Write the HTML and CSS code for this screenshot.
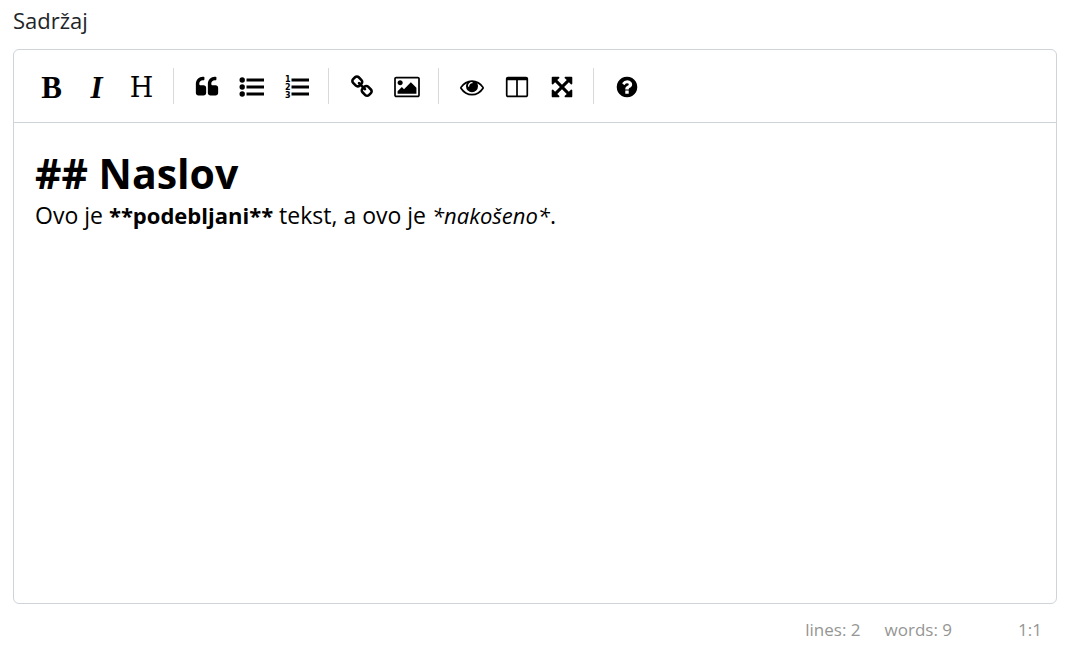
FILE: index.html
```html
<!DOCTYPE html>
<html lang="hr">
<head>
<meta charset="utf-8">
<meta name="viewport" content="width=device-width, initial-scale=1">
<title>Sadržaj</title>
<link rel="stylesheet" href="styles.css">
</head>
<body>
<main class="field">
  <div class="field-label" id="content-label">Sadržaj</div>
  <div class="editor">
    <div class="toolbar" role="toolbar" aria-label="Oblikovanje">
      <button type="button" class="tool letter bold" aria-label="Bold">B</button>
      <button type="button" class="tool letter bold italic" aria-label="Italic">I</button>
      <button type="button" class="tool letter slab" aria-label="Heading">H</button>
      <span class="separator"></span>
      <button type="button" class="tool" aria-label="Quote"><svg class="icon" viewBox="0 0 1792 1792"><path d="M832 960v384q0 80-56 136t-136 56h-384q-80 0-136-56t-56-136v-704q0-104 40.500-198.500t109.500-163.500 163.500-109.500 198.500-40.500h64q26 0 45 19t19 45v128q0 26-19 45t-45 19h-64q-106 0-181 75t-75 181v32q0 40 28 68t68 28h224q80 0 136 56t56 136zm896 0v384q0 80-56 136t-136 56h-384q-80 0-136-56t-56-136v-704q0-104 40.500-198.500t109.500-163.500 163.500-109.500 198.500-40.500h64q26 0 45 19t19 45v128q0 26-19 45t-45 19h-64q-106 0-181 75t-75 181v32q0 40 28 68t68 28h224q80 0 136 56t56 136z"/></svg></button>
      <button type="button" class="tool" aria-label="Bulleted list"><svg class="icon wide" viewBox="0 0 26 24"><circle cx="3.200" cy="5" r="2.700"/><circle cx="3.200" cy="12" r="2.700"/><circle cx="3.200" cy="19" r="2.700"/><path d="M7.500 3.500h17.500v3H7.500zM7.500 10.500h17.500v3H7.500zM7.500 17.500h17.500v3H7.500z"/></svg></button>
      <button type="button" class="tool" aria-label="Numbered list"><svg class="icon wide" viewBox="0 0 26 24"><path d="M7.500 3.500h17.500v3H7.500zM7.500 10.500h17.500v3H7.500zM7.500 17.500h17.500v3H7.500z"/><text class="digit" x="1" y="7">1</text><text class="digit" x="1" y="15">2</text><text class="digit" x="1" y="23">3</text></svg></button>
      <span class="separator"></span>
      <button type="button" class="tool" aria-label="Link"><svg class="icon" viewBox="0 0 1792 1792"><path d="M1520 1216q0-40-28-68l-208-208q-28-28-68-28-42 0-72 32 3 3 19 18.500t21.500 21.500 15 19 13 25.500 3.500 27.500q0 40-28 68t-68 28q-15 0-27.500-3.500t-25.500-13-19-15-21.500-21.500-18.500-19q-33 31-33 73 0 40 28 68l206 207q27 27 68 27 40 0 68-26l147-146q28-28 28-67zm-703-705q0-40-28-68l-206-207q-28-28-68-28-39 0-68 27l-147 146q-28 28-28 67 0 40 28 68l208 208q27 27 68 27 42 0 72-31-3-3-19-18.500t-21.500-21.500-15-19-13-25.500-3.500-27.500q0-40 28-68t68-28q15 0 27.500 3.500t25.500 13 19 15 21.500 21.500 18.500 19q33-31 33-73zm895 705q0 120-85 203l-147 146q-83 83-203 83-121 0-204-85l-206-207q-83-83-83-203 0-123 88-209l-88-88q-86 88-208 88-120 0-204-84l-208-208q-84-84-84-204t85-203l147-146q83-83 203-83 121 0 204 85l206 207q83 83 83 203 0 123-88 209l88 88q86-88 208-88 120 0 204 84l208 208q84 84 84 204z"/></svg></button>
      <button type="button" class="tool" aria-label="Image"><svg class="icon wide" viewBox="-64 0 1920 1792"><path d="M576 576q0 80-56 136t-136 56-136-56-56-136 56-136 136-56 136 56 56 136zm1024 384v448h-1408v-192l320-320 160 160 512-512zm96-704h-1600q-13 0-22.500 9.500t-9.500 22.500v1216q0 13 9.500 22.500t22.500 9.500h1600q13 0 22.500-9.500t9.500-22.500v-1216q0-13-9.500-22.500t-22.500-9.500zm160 32v1216q0 66-47 113t-113 47h-1600q-66 0-113-47t-47-113v-1216q0-66 47-113t113-47h1600q66 0 113 47t47 113z"/></svg></button>
      <span class="separator"></span>
      <button type="button" class="tool" aria-label="Preview"><svg class="icon" viewBox="0 0 1792 1792"><path d="M1664 960q-152-236-381-353 61 104 61 225 0 185-131.500 316.500t-316.500 131.500-316.500-131.500-131.500-316.500q0-121 61-225-229 117-381 353 133 205 333.500 326.500t434.500 121.500 434.500-121.500 333.500-326.500zm-720-384q0-20-14-34t-34-14q-125 0-214.500 89.500t-89.500 214.500q0 20 14 34t34 14 34-14 14-34q0-86 61-147t147-61q20 0 34-14t14-34zm848 384q0 34-20 69-140 230-376.500 368.500t-499.500 138.500-499.500-139-376.500-368q-20-35-20-69t20-69q140-229 376.500-368t499.500-139 499.500 139 376.500 368q20 35 20 69z"/></svg></button>
      <button type="button" class="tool" aria-label="Side by side"><svg class="icon" viewBox="0 0 1792 1792"><path d="M224 1536h608v-1152h-640v1120q0 13 9.500 22.500t22.500 9.500zm1376-32v-1120h-640v1152h608q13 0 22.500-9.500t9.500-22.500zm128-1216v1216q0 66-47 113t-113 47h-1344q-66 0-113-47t-47-113v-1216q0-66 47-113t113-47h1344q66 0 113 47t47 113z"/></svg></button>
      <button type="button" class="tool" aria-label="Fullscreen"><svg class="icon" viewBox="0 0 1792 1792"><path d="M1411 541l-355 355 355 355 144-144q29-31 70-14 39 17 39 59v448q0 26-19 45t-45 19h-448q-42 0-59-40-17-39 14-69l144-144-355-355-355 355 144 144q31 30 14 69-17 40-59 40h-448q-26 0-45-19t-19-45v-448q0-42 40-59 39-17 69 14l144 144 355-355-355-355-144 144q-19 19-45 19-12 0-24-5-40-17-40-59v-448q0-26 19-45t45-19h448q42 0 59 40 17 39-14 69l-144 144 355 355 355-355-144-144q-31-30-14-69 17-40 59-40h448q26 0 45 19t19 45v448q0 42-39 59-13 5-25 5-26 0-45-19z"/></svg></button>
      <span class="separator"></span>
      <button type="button" class="tool" aria-label="Help"><svg class="icon" viewBox="0 0 1792 1792"><path d="M1024 1376v-192q0-14-9-23t-23-9h-192q-14 0-23 9t-9 23v192q0 14 9 23t23 9h192q14 0 23-9t9-23zm256-672q0-88-55.500-163t-138.500-116-170-41q-243 0-371 213-15 24 8 42l132 100q7 6 19 6 16 0 25-12 53-68 86-92 34-24 86-24 48 0 85.500 26t37.500 59q0 38-20 61t-68 45q-63 28-115.500 86.500t-52.500 125.500v36q0 14 9 23t23 9h192q14 0 23-9t9-23q0-19 21.500-49.500t54.500-49.500q32-18 49-28.500t46-35 44.500-48 28-60.500 12.500-81zm384 192q0 209-103 385.500t-279.500 279.500-385.500 103-385.500-103-279.500-279.500-103-385.500 103-385.500 279.500-279.500 385.500-103 385.500 103 279.500 279.500 103 385.500z"/></svg></button>
    </div>
    <div class="document" contenteditable="true" spellcheck="false" role="textbox" aria-multiline="true" aria-labelledby="content-label">
      <div class="heading">## Naslov</div>
      <div class="line">Ovo je <strong class="strong">**podebljani**</strong> tekst, a ovo je <em class="emphasis">*nakošeno*</em>.</div>
    </div>
  </div>
  <div class="statusbar">
    <span>lines: 2</span>
    <span>words: 9</span>
    <span class="cursor">1:1</span>
  </div>
</main>
</body>
</html>
```
FILE: styles.css
```css
* {
  box-sizing: border-box;
}

body {
  margin: 0;
  background: #fff;
  color: #212529;
  font-family: "Segoe UI", "Open Sans", "Noto Sans", sans-serif;
}

.field {
  display: flex;
  flex-direction: column;
  min-height: 100vh;
  padding: 4px 16px 0 13px;
}

.field-label {
  margin-bottom: 13px;
  font-size: 22px;
  line-height: 32px;
}

.editor {
  display: flex;
  flex: 1;
  flex-direction: column;
  border: 1px solid #ced4da;
  border-radius: 6px;
  color: #000;
}

.toolbar {
  display: flex;
  align-items: center;
  padding: 18px 15px;
  border-bottom: 1px solid #ced4da;
}

.tool {
  display: flex;
  align-items: center;
  justify-content: center;
  width: 45px;
  height: 36px;
  padding: 2px 0 0;
  border: 0;
  background: none;
  color: #000;
  cursor: pointer;
}

.letter {
  padding-top: 4px;
  font-family: "Liberation Serif", serif;
  font-size: 31px;
  line-height: 32px;
}

.slab {
  font-family: "DejaVu Serif", serif;
  font-size: 27px;
}

.bold {
  font-weight: 700;
}

.italic {
  font-style: italic;
}

.icon {
  width: 24px;
  height: 24px;
  overflow: visible;
  fill: currentColor;
}

.wide {
  width: 26px;
}

.digit {
  font: 700 8px "DejaVu Sans", sans-serif;
}

.separator {
  width: 1px;
  height: 36px;
  margin: 0 10px 0 9px;
  background: #d9d9d9;
}

.document {
  flex: 1;
  padding: 24px 21px;
  outline: none;
  font-size: 23px;
  line-height: 32px;
}

.heading {
  font-size: 41px;
  font-weight: 700;
  line-height: 52px;
}

.strong {
  font-size: 22px;
  font-weight: 700;
}

.emphasis {
  font-size: 22px;
}

.statusbar {
  display: flex;
  justify-content: flex-end;
  gap: 24px;
  padding: 12px 15px 4px;
  color: #959694;
  font-size: 17px;
  line-height: 28px;
}

.cursor {
  min-width: 66px;
  text-align: right;
}
```
